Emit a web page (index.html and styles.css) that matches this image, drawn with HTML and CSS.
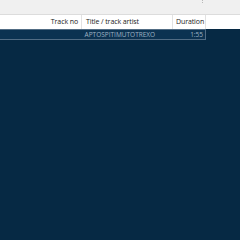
FILE: index.html
```html
<!DOCTYPE html>
<html lang="en">
<head>
    <meta charset="UTF-8">
    <title>Playlist</title>
    <link rel="stylesheet" href="styles.css">
</head>
<body>
    <div class="toolbar">
        <span class="grip"></span>
    </div>
    <div class="header">
        <div class="col col-pad"></div>
        <div class="col col-track">Track no</div>
        <div class="col col-title">Title / track artist</div>
        <div class="col col-dur">Duration</div>
    </div>
    <div class="list">
        <div class="row selected">
            <div class="cell col-pad"></div>
            <div class="cell col-track"></div>
            <div class="cell col-title">APTOSPITIMUTOTREXO</div>
            <div class="cell col-dur">1:55</div>
        </div>
    </div>
</body>
</html>
```

FILE: styles.css
```css
body {
    margin: 0;
    width: 240px;
    height: 240px;
    overflow: hidden;
    font-family: "Open Sans", "Noto Sans", sans-serif;
    background: #062944;
}
.toolbar {
    height: 14px;
    background: #f0f0f0;
    border-bottom: 1px solid #dcdcdc;
    position: relative;
}
.grip {
    position: absolute;
    left: 202px;
    top: 0;
    width: 3px;
    height: 3px;
    border-left: 1px dotted #b8b8b8;
}
.header {
    display: flex;
    height: 14px;
    background: #fff;
    font-size: 7px;
    letter-spacing: -0.1px;
    color: #1a1a1a;
    line-height: 14px;
}
.header .col {
    border-right: 1px solid #e2e2e2;
    box-sizing: border-box;
    white-space: nowrap;
    overflow: hidden;
}
.col-pad { width: 49px; }
.col-track { width: 33px; }
.col-title { width: 91px; }
.col-dur { width: 33px; }
.header .col-pad { border-right: none; }
.header .col-track { text-align: right; padding-right: 3px; }
.header .col-title { padding-left: 4px; }
.header .col-dur { padding-left: 3px; }
.row {
    display: flex;
    height: 11px;
    line-height: 10px;
    font-size: 6.5px;
    color: #9fb2c4;
    width: 206px;
    box-sizing: border-box;
}
.row.selected {
    background: #0b3251;
    border: 1px solid #516c84;
    border-left: none;
}
.cell {
    box-sizing: border-box;
    white-space: nowrap;
    overflow: hidden;
}
.row .col-title { padding-left: 3px; }
.row .col-dur { text-align: right; padding-right: 2px; }
```
